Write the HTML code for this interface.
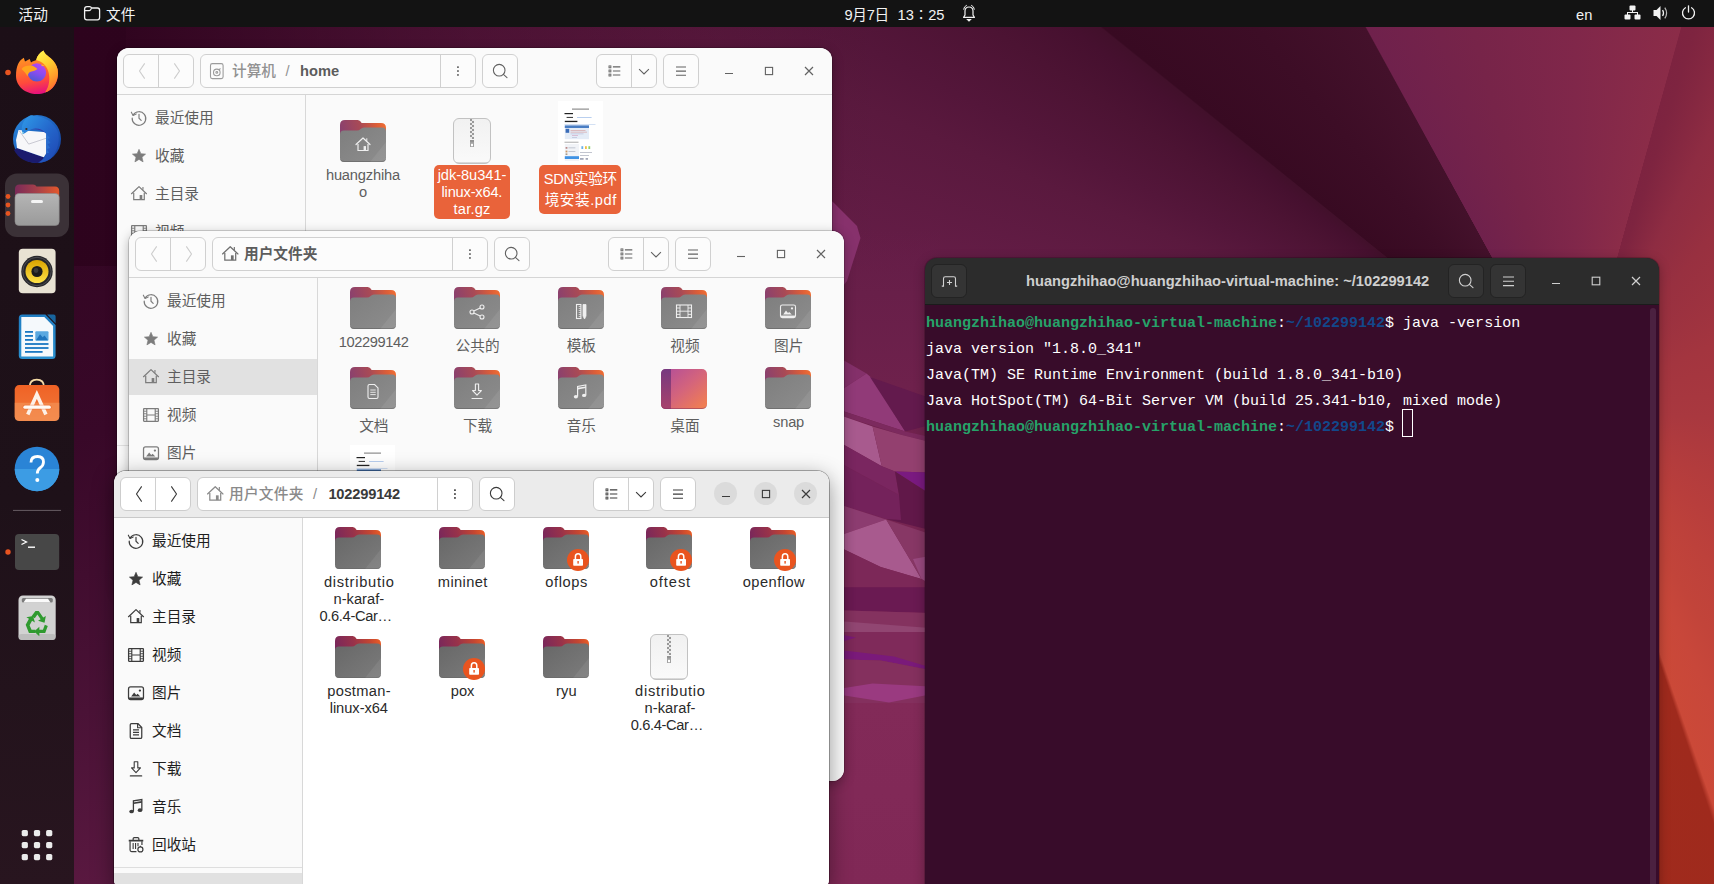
<!DOCTYPE html>
<html lang="zh-CN"><head><meta charset="utf-8"><title>Ubuntu Desktop</title>
<style>
*{box-sizing:border-box;margin:0;padding:0}
html,body{width:1714px;height:884px;overflow:hidden;background:#2c0a20}
body{position:relative;font-family:"Liberation Sans","Noto Sans CJK SC",sans-serif;font-size:14.67px;color:#3d3d3d}
.abs{position:absolute}
#wall{position:absolute;left:0;top:0;width:1714px;height:884px}
#topbar{position:absolute;left:0;top:0;width:1714px;height:27px;background:#131313;color:#f2f2f2;font-size:14.67px}
#topbar span{position:absolute;top:1.5px;line-height:27px;white-space:nowrap}
#dock{position:absolute;left:0;top:27px;width:74px;height:857px;background:linear-gradient(180deg,#1c0f17 0%,#1e1119 55%,#28151f 100%)}
.win{position:absolute;width:715px;border-radius:12px;background:#fafafa;overflow:hidden}
.shadow{position:absolute;border-radius:12px}
.hdr{position:absolute;left:0;top:0;width:715px;height:47px;background:#fafafa;border-bottom:1px solid #d5d5d5}
.win.act .hdr{background:#ebebeb;border-bottom-color:#c9c9c9}
.btn{position:absolute;top:6px;height:34px;border:1px solid #d0d0d0;border-radius:6px;background:#fcfcfc}
.win.act .btn{background:#fff;border-color:#cdcdcd}
.btn i{position:absolute;top:0;width:1px;height:32px;background:#d0d0d0}
.btn svg{position:absolute}
.hdr svg{position:absolute;overflow:visible}
.ptxt{position:absolute;top:0;line-height:32px;white-space:nowrap;color:#929292;font-size:14.67px;font-weight:500}
.ptxt b{color:#5c5c5c;font-weight:bold}
.win.act .ptxt{color:#8a8a8a}
.win.act .ptxt b{color:#3a3a3a}
.side{position:absolute;left:0;top:47px;width:189px;bottom:0;background:#fafafa;border-right:1px solid #d8d8d8}
.srow{position:absolute;left:0;width:188px;height:36px;line-height:36px;color:#5e5e5e;white-space:nowrap}
.srow span{position:absolute;left:38px;top:0}
.srow svg{position:absolute;left:13.5px;top:10px;overflow:visible}
.win.act .srow{color:#1e1e1e}
.srow.sel{background:#e1e1e1}
.cont{position:absolute;left:189px;top:47px;right:0;bottom:0;background:#fafafa}
.win.act .cont{background:#fff}
.lab{position:absolute;width:110px;text-align:center;line-height:17px;color:#5e5e5e;font-size:14.67px;white-space:nowrap}
.win.act .lab{color:#2a2a2a}
.lab.cj{line-height:21px;font-size:14.67px}
.lab.cj2{line-height:21.6px}
.sel2{position:absolute;background:#e9633a;border-radius:5px}
.lab.w{color:#fff}
.ico{position:absolute;overflow:visible}
.wc{position:absolute;width:23px;height:23px;border-radius:12px;background:#dbdbdb}
#term{position:absolute;left:925px;top:258px;width:734px;height:640px;border-radius:12px 12px 0 0;background:#380c2a;overflow:hidden}
#thdr{position:absolute;left:0;top:0;width:734px;height:46.700px;background:#2c2c2c;border-bottom:1px solid #1b1b1b}
.tbtn{position:absolute;top:6px;width:35.500px;height:34px;border:1px solid #232323;border-radius:6px;background:#343434}
#ttitle{position:absolute;left:101px;top:0;line-height:46px;color:#cfcfcf;font-weight:bold;font-size:14.67px;white-space:nowrap}
#tbody{position:absolute;left:1px;top:52.5px;font-family:"Liberation Mono","DejaVu Sans Mono",monospace;font-size:15px;line-height:26px;color:#fff;white-space:pre}
#tbody .g{color:#26a269;font-weight:bold}
#tbody .b{color:#12488b;font-weight:bold}
</style></head><body>
<div id="wallc" style="position:absolute;left:0;top:0;width:1714px;height:884px;background:conic-gradient(from 0deg at 1575px 409px,#80274a 0deg,#8b2c48 15.5deg,#7d2340 15.6deg,#7e2440 17.5deg,#8e2c42 26deg,#983040 38deg,#a3353f 65deg,#a9383f 94deg,#b83e3c 128deg,#c2443a 149deg,#c8473a 155deg,#cb4938 160.8deg,#9f2a1d 161.5deg,#a52c1a 200deg,#7f2855 225deg,#802856 236deg,#812957 250deg,#742351 262deg,#6e214d 270deg,#651d47 282deg,#5a193e 293deg,#54163a 297deg,#4c1333 303deg,#46102f 307deg,#42102b 308.8deg,#380a22 308.95deg,#3d0d26 320deg,#44112b 331.2deg,#6f214c 331.35deg,#772449 345deg,#80274a 360deg)"></div>
<svg id="wall" viewBox="0 0 1714 884">
<defs>
<linearGradient id="wbase" gradientUnits="userSpaceOnUse" x1="74" y1="27" x2="300" y2="884">
<stop offset="0" stop-color="#2f041f"/><stop offset="0.45" stop-color="#380828"/><stop offset="0.75" stop-color="#4a1236"/><stop offset="1" stop-color="#5e1a43"/>
</linearGradient>
<linearGradient id="wA1" gradientUnits="userSpaceOnUse" x1="1101" y1="27" x2="876" y2="308">
<stop offset="0" stop-color="#3f0e29"/><stop offset="0.04" stop-color="#461030"/><stop offset="0.2" stop-color="#4d1234"/><stop offset="0.48" stop-color="#57173b"/><stop offset="0.7" stop-color="#601b42"/><stop offset="1" stop-color="#69204a"/>
</linearGradient>
<linearGradient id="wA2" gradientUnits="userSpaceOnUse" x1="1200" y1="140" x2="1320" y2="60">
<stop offset="0" stop-color="#380a23"/><stop offset="1" stop-color="#44112b"/>
</linearGradient>
<linearGradient id="wA3" gradientUnits="userSpaceOnUse" x1="1400" y1="40" x2="1650" y2="250">
<stop offset="0" stop-color="#71224c"/><stop offset="1" stop-color="#8c2c49"/>
</linearGradient>
<linearGradient id="wA4" gradientUnits="userSpaceOnUse" x1="1640" y1="140" x2="1714" y2="180">
<stop offset="0" stop-color="#7c2340"/><stop offset="1" stop-color="#953040"/>
</linearGradient>
<linearGradient id="wA5" gradientUnits="userSpaceOnUse" x1="0" y1="27" x2="0" y2="884">
<stop offset="0" stop-color="#000" stop-opacity="0.04"/><stop offset="0.25" stop-color="#b83a3c" stop-opacity="0.25"/><stop offset="0.5" stop-color="#b83c3c" stop-opacity="0.85"/><stop offset="0.72" stop-color="#c8483a"/><stop offset="1" stop-color="#cc4b36"/>
</linearGradient>
<linearGradient id="wA1b" gradientUnits="userSpaceOnUse" x1="0" y1="27" x2="0" y2="266"><stop offset="0" stop-color="#6c2049" stop-opacity="0"/><stop offset="0.4" stop-color="#6c2049" stop-opacity="0.06"/><stop offset="1" stop-color="#6c2049" stop-opacity="0.5"/></linearGradient>
<linearGradient id="wleft" gradientUnits="userSpaceOnUse" x1="74" y1="0" x2="880" y2="0"><stop offset="0" stop-color="#2d031d" stop-opacity="0.98"/><stop offset="0.06" stop-color="#2d031d" stop-opacity="0.95"/><stop offset="0.25" stop-color="#2d031d" stop-opacity="0.7"/><stop offset="0.5" stop-color="#2d031d" stop-opacity="0.38"/><stop offset="0.8" stop-color="#2d031d" stop-opacity="0.1"/><stop offset="1" stop-color="#2d031d" stop-opacity="0"/></linearGradient>
<linearGradient id="wstrip" gradientUnits="userSpaceOnUse" x1="0" y1="228" x2="0" y2="884">
<stop offset="0" stop-color="#651d47" stop-opacity="0"/><stop offset="0.1" stop-color="#681f49"/><stop offset="0.24" stop-color="#6e214c"/><stop offset="0.72" stop-color="#822a58"/><stop offset="1" stop-color="#802856"/>
</linearGradient>
</defs>
<!-- far-left dark -->
<rect x="0" y="27" width="126" height="857" fill="url(#wbase)"/>
<rect x="60" y="27" width="820" height="239" fill="url(#wleft)"/>
<!-- left-of-terminal strip -->
<rect x="800" y="228" width="140" height="656" fill="url(#wstrip)"/>
<polygon points="826,196 834,203 857,226 860.500,238 847,281 843,286 826,296" fill="#87316c"/>
<polygon points="838,357 866.500,373.600 838,392" fill="#84306a"/>
<polygon points="838,392 866.500,373.600 872.600,378.700 905.200,431.600 838,409.500" fill="#913a78"/>
<polygon points="870,377 930,398 930,425 905.200,431.600" fill="#631a4d"/>
<polygon points="838,409.500 905.200,431.600 930,437 930,442 901,434.700 838,414.500" fill="#7c2a5e"/>
<polygon points="838,414.500 872.600,426.600 881.800,466.300 838,441.500" fill="#a85a8e"/>
<polygon points="872.600,426.600 901,434.700 930,442 930,472.600 895,471.400 881.800,466.300" fill="#93406f"/>
<polygon points="838,441.500 881.800,466.300 895,471.400 899,495 838,462" fill="#7a2660"/>
<polygon points="895,471.400 930,472.600 930,494 909,480.500" fill="#7a1a80"/>
<polygon points="895,471.400 909,480.500 930,494 930,530 886,519 899,495" fill="#611849"/>
<polygon points="838,462 899,495 901,520 886,519 838,504" fill="#74225b"/>
<polygon points="838,504 886.200,519.400 838,536" fill="#8c3c70"/>
<polygon points="838,536 886.200,519.400 921.500,579.100 880.700,566.900 838,546.500" fill="#a85a8e"/>
<polygon points="886.200,519.400 930,534 930,584 921.500,579.100" fill="#873765"/>
<polygon points="913,559 930,556 930,584 921.500,579.100" fill="#9a4a80"/>
<polygon points="838,546.500 880.700,566.900 921.500,579.100 930,584 930,587.300 838,587.300" fill="#7c2858"/>
<polygon points="838,587.300 930,587.300 930,613 838,610.300" fill="#6a1a52"/>
<polygon points="838,610.300 930,613 930,632 838,632" fill="#84325f"/>
<polygon points="838,621 930,628 930,632 838,632" fill="#914672"/>
<polygon points="838,632 930,632 930,667 884,656 838,651" fill="#7f2a5a"/>
<polygon points="838,634 856,637.500 838,643" fill="#7a1a78"/>
<polygon points="838,649.700 894,656.500 930,667.300 930,670 880.700,660.500 838,659.200" fill="#7a1a7a"/>
<polygon points="838,659.200 880.700,660.500 930,670 930,703 838,703" fill="#84305e"/>
<polygon points="838,689 872.600,683.600 930,686.400 930,694.500 889,702.600 838,694.500" fill="#9a3a80"/>
</svg>
<div id="topbar">
<span style="left:18.5px">活动</span>
<svg class="abs" style="left:83px;top:5px" width="18" height="17" viewBox="0 0 18 17" fill="none" stroke="#f2f2f2" stroke-width="1.3"><path d="M1.6 4 Q1.6 1.6 4 1.6 H6.6 Q8 1.6 8.6 3 H14.5 Q16.6 3 16.6 5.2 V12.6 Q16.6 14.8 14.4 14.8 H3.8 Q1.6 14.8 1.6 12.6 Z"/><path d="M1.8 5.6 H6.4 Q7.6 5.6 8.4 3.4"/></svg>
<span style="left:106px">文件</span>
<span style="left:844.500px;top:2px;letter-spacing:-0.300px">9月7日</span><span style="left:897.600px;top:2.200px;letter-spacing:-0.1px">13∶25</span>
<svg class="abs" style="left:961px;top:4px" width="16" height="18" viewBox="0 0 16 18" fill="none" stroke="#f2f2f2" stroke-width="1.2"><path d="M2.6 13.4 H13.4 L12 11 V7 Q12 3 8 3 Q4 3 4 7 V11 Z" stroke-linejoin="round"/><path d="M6.6 15.6 H9.4 L8 17 Z" fill="#f2f2f2"/><path d="M2.6 5.6 Q3 2.4 5.8 1.2 M13.4 5.6 Q13 2.4 10.2 1.2" stroke-width="1"/></svg>
<span style="left:1576px">en</span>
<svg class="abs" style="left:1624px;top:5px" width="17" height="15" viewBox="0 0 17 15" fill="#f2f2f2"><rect x="5.5" y="0.5" width="6" height="5" rx="1"/><rect x="0.5" y="9.5" width="6" height="5" rx="1"/><rect x="10.5" y="9.5" width="6" height="5" rx="1"/><path d="M8 5 h1 v2 h5 v3 h-1 v-2 h-9 v2 h-1 v-3 h5z"/></svg>
<svg class="abs" style="left:1653px;top:5px" width="16" height="16" viewBox="0 0 16 16" fill="#f2f2f2"><path d="M0.5 5 H3.5 L7.5 1 V15 L3.5 11 H0.5 Z"/><path d="M9.6 5 Q11.4 8 9.6 11" fill="none" stroke="#f2f2f2" stroke-width="1.3"/><path d="M11.8 2.6 Q15.4 8 11.8 13.4" fill="none" stroke="#f2f2f2" stroke-width="1.2" opacity="0.75"/></svg>
<svg class="abs" style="left:1681px;top:5px" width="15" height="15" viewBox="0 0 15 15" fill="none" stroke="#f2f2f2" stroke-width="1.3" stroke-linecap="round"><path d="M4.4 2.8 A6 6 0 1 0 10.6 2.8"/><path d="M7.5 0.8 V7"/></svg>
</div>
<div id="dock"></div>
<svg class="abs" style="left:0;top:27px" width="74" height="857" viewBox="0 27 74 857">
<defs>
<linearGradient id="ffb" x1="0.3" y1="0" x2="0.5" y2="1"><stop offset="0" stop-color="#ffa31f"/><stop offset="0.35" stop-color="#ff7a2a"/><stop offset="0.7" stop-color="#ff4a3c"/><stop offset="1" stop-color="#e6107e"/></linearGradient><linearGradient id="ffy" x1="0.2" y1="0" x2="0.6" y2="1"><stop offset="0" stop-color="#fff24d"/><stop offset="0.4" stop-color="#ffcb30"/><stop offset="0.75" stop-color="#ff9a2a"/><stop offset="1" stop-color="#ff6a30"/></linearGradient><linearGradient id="tbw" x1="0" y1="0" x2="1" y2="1"><stop offset="0" stop-color="#2f9ae8"/><stop offset="0.5" stop-color="#2468cc"/><stop offset="1" stop-color="#1f44b0"/></linearGradient><radialGradient id="ffo" cx="0.55" cy="0.3" r="0.8"><stop offset="0" stop-color="#ffe847"/><stop offset="0.35" stop-color="#ffa429"/><stop offset="0.7" stop-color="#ff4a3a"/><stop offset="1" stop-color="#e31587"/></radialGradient>
<linearGradient id="ffp" x1="0.7" y1="0" x2="0.3" y2="1"><stop offset="0" stop-color="#b846f2"/><stop offset="0.5" stop-color="#8a4cf0"/><stop offset="1" stop-color="#4a5ad2"/></linearGradient>
<linearGradient id="tbg" x1="0" y1="0" x2="1" y2="1"><stop offset="0" stop-color="#2a8be0"/><stop offset="1" stop-color="#123a9c"/></linearGradient>
<linearGradient id="ftab" x1="0" y1="0" x2="1" y2="0"><stop offset="0" stop-color="#7a2a58"/><stop offset="0.5" stop-color="#a6404a"/><stop offset="1" stop-color="#e4582b"/></linearGradient>
<linearGradient id="fgr" x1="0" y1="0" x2="0" y2="1"><stop offset="0" stop-color="#b5b5b5"/><stop offset="1" stop-color="#9a9a9a"/></linearGradient>
<linearGradient id="rby" x1="0" y1="0" x2="0" y2="1"><stop offset="0" stop-color="#d9a300"/><stop offset="1" stop-color="#ffe247"/></linearGradient><linearGradient id="wr" x1="0" y1="0" x2="0" y2="1"><stop offset="0" stop-color="#1f7dc2"/><stop offset="1" stop-color="#2a90cf"/></linearGradient><linearGradient id="sw" x1="0" y1="0" x2="0" y2="1"><stop offset="0" stop-color="#f06225"/><stop offset="1" stop-color="#f07a3c"/></linearGradient>
<linearGradient id="hp" x1="0" y1="0" x2="0" y2="1"><stop offset="0" stop-color="#2a86d8"/><stop offset="1" stop-color="#3aa0e6"/></linearGradient>
</defs>
<!-- firefox -->
<circle cx="8" cy="72.500" r="2.800" fill="#e95420"/>
<path d="M16 76 C16 66 19 60.500 23.800 57.800 L25 61.500 L29.700 59 L31 62.500 C33 61 35 60.500 36.200 60 C37 56 40 52.500 43.400 50.600 C45 55 50 57 53 60.500 C56 64 58 68 58 73 C58 86 49 94 37 94 C25 94 16 86 16 76 Z" fill="url(#ffb)"/>
<path d="M36.200 60 C37 56 40 52.500 43.400 50.600 C45 55 50 57 53 60.500 C56 64 58 68 58 73 C58 82 53 90 45 92.600 C49.500 86 50.500 78 48 70.500 C46 65 42 61.500 36.200 60 Z" fill="url(#ffy)"/>
<circle cx="36.900" cy="72.400" r="9.200" fill="url(#ffp)"/>
<path d="M21.500 69 C24 65.500 30 65 33 66 C35 67 36.500 68 37.500 69 C35 71 32 71.500 30 72 C28.500 73 27.800 74.500 27.500 76.500 C26 73 24 71.500 21.500 69 Z" fill="#ffa51e"/>
<path d="M41 64.500 C43 64.500 44.500 65.500 45.500 66.500 C44 66 43 66 42 66.300 Z" fill="#ffb52a"/>
<!-- thunderbird -->
<circle cx="37" cy="139" r="24" fill="url(#tbg)"/>
<path d="M14 150 C18 158 26 163 37 163 C38 163 39 163 40 162.500 L44 157.500 L17 148 Z" fill="#1b1b6e"/>
<path d="M18.500 130 L46.400 132.300 L46.400 153 L43.800 157.300 L17 148 L16 140 Z" fill="#f7f7f9"/>
<path d="M19.500 131 L28.700 144.100 L46.400 138.200" fill="none" stroke="#b4b4c0" stroke-width="0.700"/>
<path d="M27 130.500 C33 128 41 129 46.400 133.500 L46.400 131 C42 126 33 125.500 27 130.500 Z" fill="#3a2fa0" opacity="0.8"/>
<path d="M22.800 134.200 C20.500 128 22 120 30 115.500 C32 115 33 115.500 33.500 116 C44 116 54 122 58 132 C60 140 58 150 52 157 C50 160 44 162.800 38 162.500 C44 160 47 156 46.400 150 L46.400 134 C42 128 34 127 29 130.500 C26.500 132 24.500 133.500 22.800 134.200 Z" fill="url(#tbw)"/>
<path d="M46.400 134 L50 138 L47.500 139 L50.500 143 L47.500 144 L50 148 L47 149 L49 153 L46.400 153 Z" fill="#2a6fd0"/>
<path d="M22.800 134.200 L21.600 131.600 L24 132.500 Z" fill="#9ad8e8"/>
<circle cx="26.400" cy="129" r="1.100" fill="#3a2418"/>
<!-- files active -->
<rect x="5" y="173.500" width="64" height="63.500" rx="12" fill="#3b3137"/>
<circle cx="8" cy="196.500" r="2.400" fill="#e95420"/><circle cx="8" cy="205" r="2.400" fill="#e95420"/><circle cx="8" cy="213.500" r="2.400" fill="#e95420"/>
<path d="M15 189 Q15 184.500 19.500 184.500 H33 Q35.500 184.500 36.500 186.500 H55 Q59.200 186.500 59.200 191 V200 H15 Z" fill="url(#ftab)"/>
<rect x="15" y="193.500" width="44.200" height="32" rx="4" fill="url(#fgr)"/>
<rect x="15" y="193.500" width="44.200" height="32" rx="4" fill="none" stroke="#8a8a8a" stroke-width="0.6"/>
<rect x="31" y="200" width="12" height="3" rx="1.500" fill="#f5f5f5"/>
<!-- rhythmbox -->
<rect x="18.800" y="248.700" width="36.800" height="44.500" rx="4" fill="#e8e2d3"/>
<circle cx="37" cy="271.500" r="15.700" fill="#26262a"/>
<circle cx="37" cy="271.500" r="14.200" fill="none" stroke="#55555c" stroke-width="0.800"/>
<circle cx="37" cy="271.500" r="11.500" fill="url(#rby)"/>
<circle cx="37" cy="271.500" r="5.600" fill="#1c1c1c"/>
<circle cx="36" cy="270.500" r="2.400" fill="#3a3a3a"/>
<!-- writer -->
<path d="M22.300 314.600 H45.400 L55.600 325 V355.600 Q55.600 359.100 52.100 359.100 H22.300 Q18.800 359.100 18.800 355.600 V318.100 Q18.800 314.600 22.300 314.600 Z" fill="url(#wr)"/>
<path d="M21.300 317.100 H44.300 L53.100 326 V356.600 H21.300 Z" fill="#f5f9fc"/>
<path d="M47 314.600 H53.600 Q55.600 314.600 55.600 316.600 V323.400 Z" fill="#18659e"/>
<rect x="25" y="331" width="8" height="1.800" fill="#1b78c2"/><rect x="25" y="335" width="8" height="1.800" fill="#1b78c2"/><rect x="25" y="339" width="8" height="1.800" fill="#1b78c2"/>
<rect x="35.300" y="331.200" width="13.200" height="9.500" rx="1" fill="#5aa8e0"/><path d="M36 340.200 L40 334.200 L42.600 337.200 L44.600 335.400 L48 340.200 Z" fill="#1f74bc"/>
<rect x="25" y="343.100" width="23.500" height="1.800" fill="#1b78c2"/><rect x="25" y="347.100" width="23.500" height="1.800" fill="#1b78c2"/><rect x="25" y="351" width="17.600" height="1.800" fill="#1b78c2"/>
<!-- software -->
<path d="M29.600 387 Q29.600 379.600 36.800 379.600 Q44 379.600 44 387" fill="none" stroke="#f5dba6" stroke-width="1.800"/>
<rect x="14.700" y="385.100" width="44.600" height="35.800" rx="4.500" fill="url(#sw)"/>
<path d="M14.700 402.800 H59.300 V416.400 Q59.300 420.900 54.800 420.900 H19.200 Q14.700 420.900 14.700 416.400 Z" fill="#f5975c" opacity="0.600"/>
<path d="M27.800 414.600 L36.850 394.500 L45.900 414.600" fill="none" stroke="#fdf1e8" stroke-width="3.600" stroke-linejoin="miter"/>
<path d="M25 407.200 H49.200" stroke="#e8632a" stroke-width="4.800" stroke-linecap="round" opacity="0.5"/>
<path d="M25 407.200 H49.200" stroke="#fffaf5" stroke-width="3.300" stroke-linecap="round"/>
<!-- help -->
<circle cx="37" cy="469" r="22.300" fill="#2a84d6"/><path d="M14.700 469 A22.300 22.300 0 0 0 59.300 469 Z" fill="#3c9ce4"/>
<path d="M31 462.500 Q31 456.500 37.500 456.500 Q43.500 456.500 43.500 462 Q43.500 465.500 40 468 Q37.300 470 37.300 473.500" fill="none" stroke="#fff" stroke-width="2.800"/>
<circle cx="37.300" cy="480" r="2" fill="#fff"/>
<!-- separator -->
<rect x="13" y="509.900" width="48" height="1" fill="#665c63"/>
<!-- terminal -->
<circle cx="8" cy="552" r="2.700" fill="#e95420"/>
<rect x="15" y="534" width="44.200" height="36" rx="4" fill="#474747"/>
<path d="M21.500 539.500 L26.500 542 L21.500 544.500" fill="none" stroke="#fff" stroke-width="1.300"/>
<rect x="28" y="546.500" width="7" height="1.400" fill="#fff"/>
<!-- trash -->
<rect x="18.500" y="595.400" width="37.200" height="44.600" rx="4.500" fill="#d2d2d2"/>
<rect x="18.500" y="634" width="37.200" height="6" rx="3" fill="#bdbdbd"/>
<rect x="21.800" y="598" width="31" height="4.600" rx="1.500" fill="#7a7a7a"/>
<path d="M23.500 602.600 L26 598.800 H48 L50.500 602.600 Z" fill="#fafafa"/>
<g fill="#2f9a2f" transform="translate(37 624) scale(1.3) translate(-37.200 -621.500)"><path d="M33 615.500 L36 611.500 H38.500 L42 616.500 L44 615.300 L43 620.500 L38 619 L40 617.800 L37.500 614.200 L35.500 617 Z"/><path d="M45.500 623 L43.500 628.500 L39 628.500 V631 L35 627.300 L39 623.600 V626 H41.800 L43.200 622 Z"/><path d="M28.500 622 L31 617.500 L29 616.400 L34.200 615.300 L35.600 620.400 L33.400 619 L31.500 622.500 L33 626 H36 V628.500 H31 Z"/></g>
<!-- apps grid -->
<g fill="#ebebeb"><rect x="21.700" y="830" width="6.200" height="6.200" rx="1.600"/><rect x="33.900" y="830" width="6.200" height="6.200" rx="1.600"/><rect x="46.100" y="830" width="6.200" height="6.200" rx="1.600"/><rect x="21.700" y="842" width="6.200" height="6.200" rx="1.600"/><rect x="33.900" y="842" width="6.200" height="6.200" rx="1.600"/><rect x="46.100" y="842" width="6.200" height="6.200" rx="1.600"/><rect x="21.700" y="854" width="6.200" height="6.200" rx="1.600"/><rect x="33.900" y="854" width="6.200" height="6.200" rx="1.600"/><rect x="46.100" y="854" width="6.200" height="6.200" rx="1.600"/></g>
</svg>
<svg width="0" height="0" style="position:absolute"><defs><linearGradient id="ft" gradientUnits="userSpaceOnUse" x1="0" y1="14" x2="46" y2="2"><stop offset="0" stop-color="#884070"/><stop offset="0.45" stop-color="#a84a56"/><stop offset="0.8" stop-color="#dc5e38"/><stop offset="1" stop-color="#f27032"/></linearGradient><linearGradient id="fb" x1="0" y1="0" x2="1" y2="1"><stop offset="0" stop-color="#7e7e7e"/><stop offset="1" stop-color="#8d8d8d"/></linearGradient><linearGradient id="fta" gradientUnits="userSpaceOnUse" x1="0" y1="14" x2="46" y2="2"><stop offset="0" stop-color="#77275c"/><stop offset="0.42" stop-color="#98324a"/><stop offset="0.76" stop-color="#c44631"/><stop offset="1" stop-color="#ec5f24"/></linearGradient><linearGradient id="fba" x1="0" y1="0" x2="1" y2="1"><stop offset="0" stop-color="#676767"/><stop offset="1" stop-color="#7c7c7c"/></linearGradient><linearGradient id="dsk" x1="0" y1="0" x2="1" y2="1"><stop offset="0" stop-color="#b04c9c"/><stop offset="0.5" stop-color="#d4647c"/><stop offset="1" stop-color="#f5824c"/></linearGradient><linearGradient id="dsk2" x1="0" y1="0" x2="0" y2="1"><stop offset="0" stop-color="#76397f"/><stop offset="1" stop-color="#a8426c"/></linearGradient></defs></svg>
<div class="shadow" style="left:117px;top:48px;width:715px;height:548px;box-shadow:0 0 0 1px rgba(0,0,0,0.16),0 3px 12px rgba(0,0,0,0.30)"></div>
<div class="win" id="w1" style="left:117px;top:48px;height:548px"><div class="hdr"><div class="btn" style="left:6px;width:71px"><i style="left:34px"></i><svg style="left:13px;top:8px" width="10" height="16" viewBox="0 0 10 16" fill="none" stroke="#cdcdcd" stroke-width="1.1"><path d="M7.700 0.400 L2.500 8 L7.700 15.600"/></svg><svg style="left:47.500px;top:8px" width="10" height="16" viewBox="0 0 10 16" fill="none" stroke="#cdcdcd" stroke-width="1.1"><path d="M2.300 0.400 L7.500 8 L2.300 15.600"/></svg></div><div class="btn" style="left:83px;width:276px"><i style="left:239px"></i><svg style="left:8.300px;top:8px" width="16" height="16" viewBox="0 0 16 16" fill="none" stroke="#9c9c9c" stroke-width="1.1"><rect x="1.500" y="0.600" width="12.600" height="15" rx="1.800"/><circle cx="7.800" cy="9.400" r="3.300"/><circle cx="7.800" cy="9.400" r="0.900"/><path d="M10.200 6.800 L11.400 5.400"/></svg><span class="ptxt" style="left:31px">计算机<span style="margin:0 10.500px 0 9.500px">/</span><b>home</b></span><svg style="left:255px;top:9px" width="4" height="14" viewBox="0 0 4 14" fill="#626262"><rect x="1.1" y="2.300" width="1.700" height="1.700"/><rect x="1.100" y="6.200" width="1.700" height="1.700"/><rect x="1.100" y="10.100" width="1.700" height="1.700"/></svg></div><div class="btn" style="left:365px;width:36px"><svg style="left:9px;top:8px" width="16" height="16" viewBox="0 0 16 16" fill="none" stroke="#626262" stroke-width="1.1"><circle cx="7.200" cy="7.200" r="5.800"/><path d="M11.400 11.400 L15 14.600" stroke-linecap="round"/></svg></div><div class="btn" style="left:479px;width:61px"><i style="left:34px"></i><svg style="left:10px;top:9px" width="14" height="14" viewBox="0 0 14 14" fill="none" stroke="#626262" stroke-width="1"><g stroke-width="0.900"><rect x="2" y="1.900" width="1.900" height="1.900"/><rect x="2" y="6" width="1.900" height="1.900"/><rect x="2" y="10.100" width="1.900" height="1.900"/></g><path d="M5.900 2.850 H13.300 M5.900 6.950 H13.300 M5.900 11.050 H13.300" stroke-width="1.100"/></svg><svg style="left:41.300px;top:12.500px" width="12" height="8" viewBox="0 0 12 8" fill="none" stroke="#626262" stroke-width="1.100"><path d="M1.100 1.200 L6 6 L10.900 1.200"/></svg></div><div class="btn" style="left:546px;width:36px"><svg style="left:11.600px;top:10.600px" width="11" height="11" viewBox="0 0 11 11" stroke="#626262" stroke-width="1.100"><path d="M0 1 H10 M0 5.100 H10 M0 9.200 H10"/></svg></div><svg style="left:606.700px;top:18px" width="10" height="10" viewBox="0 0 10 10" stroke="#626262" stroke-width="1.100" fill="none"><path d="M1 7.500 H9"/></svg><svg style="left:646.700px;top:18px" width="10" height="10" viewBox="0 0 10 10" stroke="#626262" stroke-width="1.100" fill="none"><rect x="1.400" y="1.400" width="7.200" height="7.200"/></svg><svg style="left:686.600px;top:18px" width="10" height="10" viewBox="0 0 10 10" stroke="#626262" stroke-width="1.200" fill="none"><path d="M1 1 L9 9 M9 1 L1 9"/></svg></div><div class="side"><div class="srow" style="top:5px"><svg width="16" height="16" viewBox="0 0 16 16" fill="none" stroke="#7c7c7c" stroke-width="1.1"><g transform="translate(8 8) scale(1.08) translate(-8 -8)"><path d="M2.6 5.2 A6.3 6.3 0 1 1 1.7 8" stroke-linecap="round"/><path d="M0.9 2.6 L2.5 5.6 L5.4 4.2" stroke-linecap="round" stroke-linejoin="round" stroke-width="1"/><path d="M8 4.6 V8.2 L10 10.2" stroke-linecap="round"/></g></svg><span>最近使用</span></div><div class="srow" style="top:43px"><svg width="16" height="16" viewBox="0 0 16 16" fill="none" stroke="#7c7c7c" stroke-width="1.1"><g transform="translate(8 7.7) scale(1.0) translate(-8 -8)"><path d="M8 1.6 L9.9 6 L14.6 6.4 L11 9.5 L12.1 14.2 L8 11.7 L3.9 14.2 L5 9.5 L1.4 6.4 L6.1 6 Z" fill="#7c7c7c" stroke-width="0.6" stroke-linejoin="round"/></g></svg><span>收藏</span></div><div class="srow" style="top:81px"><svg width="16" height="16" viewBox="0 0 16 16" fill="none" stroke="#7c7c7c" stroke-width="1.1"><g transform="translate(8 7.5) scale(1.1) translate(-8 -8)"><path d="M1.2 8.2 L8 1.8 L14.8 8.2" stroke-linecap="round" stroke-linejoin="round"/><path d="M3.2 7.4 V13.6 H12.8 V7.4"/><path d="M11.6 2 V4.6" stroke-width="1"/><rect x="8.6" y="9.4" width="2.4" height="4.2" fill="#7c7c7c" stroke="none"/></g></svg><span>主目录</span></div><div class="srow" style="top:119px"><svg width="16" height="16" viewBox="0 0 16 16" fill="none" stroke="#7c7c7c" stroke-width="1.1"><g transform="translate(8 8) scale(1.14) translate(-8 -8)"><rect x="1.500" y="2.500" width="13" height="11" rx="0.400"/><path d="M4.300 2.500 V13.500 M11.700 2.500 V13.500 M4.300 8 H11.700" stroke-width="1"/><path d="M1.500 4.700 H4.300 M1.500 6.900 H4.300 M1.500 9.100 H4.300 M1.500 11.300 H4.300 M11.700 4.700 H14.500 M11.700 6.900 H14.500 M11.700 9.100 H14.500 M11.700 11.300 H14.500" stroke-width="0.800"/></g></svg><span>视频</span></div><div class="abs" style="left:0;top:349.500px;width:188px;height:1px;background:#e2e2e2"></div></div><div class="cont"><div class="abs" style="left:34.0px;top:25px"><svg class="ico" width="46" height="42" viewBox="0 0 46 42"><path d="M0 5 Q0 0 5 0 H17.5 Q19.5 0 20.8 1.8 L21.6 3 H41 Q46 3 46 8 V20 H0 Z" fill="url(#ft)"/><path d="M0 14.500 Q0 10.500 4 10.500 H17 Q19.200 10.500 20.600 9 Q22 7.500 24 7.500 H42 Q46 7.500 46 11.500 V37.500 Q46 42 41.500 42 H4.500 Q0 42 0 37.500 Z" fill="url(#fb)"/><path d="M4.500 42 H41.500 Q46 42 46 37.500 V36.500 Q46 41 41.500 41 H4.500 Q0 41 0 36.500 V37.500 Q0 42 4.500 42Z" fill="#6a6a6a" opacity="0.8"/><path d="M46 22 V37.500 Q46 42 41.500 42 H30 Z" fill="#fff" opacity="0.07"/><g transform="translate(15,16.500)" fill="none" stroke="#efefef" stroke-width="1.200"><path d="M1 8 L8 1.500 L15 8" stroke-linejoin="round" stroke-linecap="round"/><path d="M3 7.400 V14 H13 V7.400"/><path d="M11.800 1.800 V4.400" stroke-width="1"/><rect x="8.600" y="9.600" width="2.400" height="4.400" fill="#efefef" stroke="none"/></g></svg></div><div class="lab" style="left:2.00px;top:72px"><span style="display:block;letter-spacing:-0.18px;margin-right:0.18px">huangzhiha</span><span style="display:block">o</span></div><div class="sel2" style="left:128.3px;top:70.30000000000001px;width:75.600px;height:53.600px"></div><div class="abs" style="left:147.0px;top:23px"><svg class="ico" width="38" height="46" viewBox="0 0 38 46"><defs><linearGradient id="zg" x1="0" y1="0" x2="0" y2="1"><stop offset="0" stop-color="#f1f1f1"/><stop offset="1" stop-color="#fafafa"/></linearGradient></defs><rect x="0.500" y="0.500" width="37" height="45" rx="5.500" fill="url(#zg)" stroke="#c2c2c2"/><path d="M3 44.600 H35" stroke="#b0b0b0" stroke-width="0.800" opacity="0.6"/><rect x="17" y="1.0" width="2" height="2" fill="#999"/><rect x="19" y="1.0" width="2" height="2" fill="#ececec"/><rect x="19" y="3.0" width="2" height="2" fill="#999"/><rect x="17" y="3.0" width="2" height="2" fill="#ececec"/><rect x="17" y="5.0" width="2" height="2" fill="#999"/><rect x="19" y="5.0" width="2" height="2" fill="#ececec"/><rect x="19" y="7.0" width="2" height="2" fill="#999"/><rect x="17" y="7.0" width="2" height="2" fill="#ececec"/><rect x="17" y="9.0" width="2" height="2" fill="#999"/><rect x="19" y="9.0" width="2" height="2" fill="#ececec"/><rect x="19" y="11.0" width="2" height="2" fill="#999"/><rect x="17" y="11.0" width="2" height="2" fill="#ececec"/><rect x="17" y="13.0" width="2" height="2" fill="#999"/><rect x="19" y="13.0" width="2" height="2" fill="#ececec"/><rect x="19" y="15.0" width="2" height="2" fill="#999"/><rect x="17" y="15.0" width="2" height="2" fill="#ececec"/><rect x="17" y="17.0" width="2" height="2" fill="#999"/><rect x="19" y="17.0" width="2" height="2" fill="#ececec"/><rect x="19" y="19.0" width="2" height="2" fill="#999"/><rect x="17" y="19.0" width="2" height="2" fill="#ececec"/><rect x="17" y="22.200" width="4" height="6.800" fill="#a2a2a2"/><rect x="17" y="22.200" width="4" height="1.400" fill="#8c8c8c"/><rect x="18" y="25.800" width="2" height="2.400" fill="#fff"/></svg></div><div class="lab w" style="left:111.00px;top:72px"><span style="display:block;letter-spacing:-0.06px;margin-right:0.06px">jdk-8u341-</span><span style="display:block;letter-spacing:-0.21px;margin-right:0.21px">linux-x64.</span><span style="display:block;letter-spacing:0.19px;margin-right:-0.19px">tar.gz</span></div><div class="sel2" style="left:233px;top:70.30000000000001px;width:82px;height:48.700px"></div><div class="abs" style="left:252.0px;top:5.5px"><svg class="ico" width="45" height="63" viewBox="0 0 45 63"><rect width="45" height="63" fill="#fff"/><rect x="14" y="7.600" width="17" height="1" fill="#777"/><rect x="6.500" y="12" width="8.500" height="1.200" fill="#222"/><rect x="8.600" y="15.900" width="6.400" height="1.100" fill="#444"/><rect x="19" y="16" width="14.600" height="0.800" fill="#a8c4ec"/><rect x="6.800" y="19.800" width="12.600" height="1.300" fill="#222"/><rect x="6.500" y="23.300" width="31" height="0.500" fill="#a9c3e8"/><rect x="6.800" y="24.400" width="24.200" height="13.800" fill="#e4ecf7"/><rect x="6.800" y="24.400" width="24.200" height="2.600" fill="#4a7ec4"/><rect x="7.600" y="27.800" width="3.600" height="4" fill="#3a6cb8"/><rect x="12.500" y="29" width="15" height="0.600" fill="#d39a9a"/><rect x="12.500" y="30.800" width="16.500" height="0.600" fill="#d39a9a"/><rect x="12.500" y="32.600" width="13" height="0.600" fill="#b4b8d4"/><rect x="14" y="34.400" width="6" height="0.600" fill="#d0a0c0"/><rect x="14" y="36" width="5" height="0.600" fill="#b4b8d4"/><rect x="6.500" y="40.800" width="14" height="0.700" fill="#888"/><rect x="6.800" y="43" width="14.200" height="17" fill="#f1f3f7"/><rect x="6.800" y="55.200" width="14.200" height="2.800" fill="#3f92e4"/><rect x="7.600" y="46" width="1.800" height="1.800" fill="#b88"/><rect x="7.600" y="49.600" width="1.800" height="1.800" fill="#c96"/><rect x="7.600" y="52.400" width="1.800" height="1.600" fill="#a98"/><rect x="10.400" y="46.600" width="7" height="0.600" fill="#a4a8b8"/><rect x="10.400" y="50.200" width="7" height="0.600" fill="#a4a8b8"/><rect x="23.400" y="45.200" width="1.800" height="2.800" fill="#6ab0e8"/><rect x="27" y="45.200" width="1.800" height="2.800" fill="#f0c040"/><rect x="30.400" y="45.200" width="1.800" height="2.800" fill="#8ed070"/><rect x="22" y="51" width="12" height="0.600" fill="#9a9eb0"/><rect x="22" y="54.200" width="9" height="0.600" fill="#9a9eb0"/><rect x="22" y="57" width="3.600" height="1.800" fill="#a4a8b8"/><rect x="27.600" y="57" width="2.400" height="1.800" fill="#a4a8b8"/></svg></div><div class="lab cj w cj2" style="left:219.50px;top:73.80000000000001px"><span style="display:block;letter-spacing:-0.29px;margin-right:0.29px">SDN实验环</span><span style="display:block;letter-spacing:0.54px;margin-right:-0.54px">境安装.pdf</span></div></div></div>
<div class="shadow" style="left:129px;top:231px;width:715px;height:550px;box-shadow:0 0 0 1px rgba(0,0,0,0.16),0 3px 12px rgba(0,0,0,0.30)"></div>
<div class="win" id="w2" style="left:129px;top:231px;height:550px"><div class="hdr"><div class="btn" style="left:6px;width:71px"><i style="left:34px"></i><svg style="left:13px;top:8px" width="10" height="16" viewBox="0 0 10 16" fill="none" stroke="#cdcdcd" stroke-width="1.1"><path d="M7.700 0.400 L2.500 8 L7.700 15.600"/></svg><svg style="left:47.500px;top:8px" width="10" height="16" viewBox="0 0 10 16" fill="none" stroke="#cdcdcd" stroke-width="1.1"><path d="M2.300 0.400 L7.500 8 L2.300 15.600"/></svg></div><div class="btn" style="left:83px;width:276px"><i style="left:239px"></i><svg style="left:8.500px;top:8px" width="16.500" height="16.500" viewBox="0 0 16 16" fill="none" stroke="#707070" stroke-width="1.1"><g transform="translate(8 7.5) scale(1.1) translate(-8 -8)"><path d="M1.2 8.2 L8 1.8 L14.8 8.2" stroke-linecap="round" stroke-linejoin="round"/><path d="M3.2 7.4 V13.6 H12.8 V7.4"/><path d="M11.6 2 V4.6" stroke-width="1"/><rect x="8.6" y="9.4" width="2.4" height="4.2" fill="#707070" stroke="none"/></g></svg><span class="ptxt" style="left:31px"><b>用户文件夹</b></span><svg style="left:255px;top:9px" width="4" height="14" viewBox="0 0 4 14" fill="#626262"><rect x="1.1" y="2.300" width="1.700" height="1.700"/><rect x="1.100" y="6.200" width="1.700" height="1.700"/><rect x="1.100" y="10.100" width="1.700" height="1.700"/></svg></div><div class="btn" style="left:365px;width:36px"><svg style="left:9px;top:8px" width="16" height="16" viewBox="0 0 16 16" fill="none" stroke="#626262" stroke-width="1.1"><circle cx="7.200" cy="7.200" r="5.800"/><path d="M11.400 11.400 L15 14.600" stroke-linecap="round"/></svg></div><div class="btn" style="left:479px;width:61px"><i style="left:34px"></i><svg style="left:10px;top:9px" width="14" height="14" viewBox="0 0 14 14" fill="none" stroke="#626262" stroke-width="1"><g stroke-width="0.900"><rect x="2" y="1.900" width="1.900" height="1.900"/><rect x="2" y="6" width="1.900" height="1.900"/><rect x="2" y="10.100" width="1.900" height="1.900"/></g><path d="M5.900 2.850 H13.300 M5.900 6.950 H13.300 M5.900 11.050 H13.300" stroke-width="1.100"/></svg><svg style="left:41.300px;top:12.500px" width="12" height="8" viewBox="0 0 12 8" fill="none" stroke="#626262" stroke-width="1.100"><path d="M1.100 1.200 L6 6 L10.900 1.200"/></svg></div><div class="btn" style="left:546px;width:36px"><svg style="left:11.600px;top:10.600px" width="11" height="11" viewBox="0 0 11 11" stroke="#626262" stroke-width="1.100"><path d="M0 1 H10 M0 5.100 H10 M0 9.200 H10"/></svg></div><svg style="left:606.700px;top:18px" width="10" height="10" viewBox="0 0 10 10" stroke="#626262" stroke-width="1.100" fill="none"><path d="M1 7.500 H9"/></svg><svg style="left:646.700px;top:18px" width="10" height="10" viewBox="0 0 10 10" stroke="#626262" stroke-width="1.100" fill="none"><rect x="1.400" y="1.400" width="7.200" height="7.200"/></svg><svg style="left:686.600px;top:18px" width="10" height="10" viewBox="0 0 10 10" stroke="#626262" stroke-width="1.200" fill="none"><path d="M1 1 L9 9 M9 1 L1 9"/></svg></div><div class="side"><div class="srow" style="top:5px"><svg width="16" height="16" viewBox="0 0 16 16" fill="none" stroke="#7c7c7c" stroke-width="1.1"><g transform="translate(8 8) scale(1.08) translate(-8 -8)"><path d="M2.6 5.2 A6.3 6.3 0 1 1 1.7 8" stroke-linecap="round"/><path d="M0.9 2.6 L2.5 5.6 L5.4 4.2" stroke-linecap="round" stroke-linejoin="round" stroke-width="1"/><path d="M8 4.6 V8.2 L10 10.2" stroke-linecap="round"/></g></svg><span>最近使用</span></div><div class="srow" style="top:43px"><svg width="16" height="16" viewBox="0 0 16 16" fill="none" stroke="#7c7c7c" stroke-width="1.1"><g transform="translate(8 7.7) scale(1.0) translate(-8 -8)"><path d="M8 1.6 L9.9 6 L14.6 6.4 L11 9.5 L12.1 14.2 L8 11.7 L3.9 14.2 L5 9.5 L1.4 6.4 L6.1 6 Z" fill="#7c7c7c" stroke-width="0.6" stroke-linejoin="round"/></g></svg><span>收藏</span></div><div class="srow sel" style="top:81px"><svg width="16" height="16" viewBox="0 0 16 16" fill="none" stroke="#7c7c7c" stroke-width="1.1"><g transform="translate(8 7.5) scale(1.1) translate(-8 -8)"><path d="M1.2 8.2 L8 1.8 L14.8 8.2" stroke-linecap="round" stroke-linejoin="round"/><path d="M3.2 7.4 V13.6 H12.8 V7.4"/><path d="M11.6 2 V4.6" stroke-width="1"/><rect x="8.6" y="9.4" width="2.4" height="4.2" fill="#7c7c7c" stroke="none"/></g></svg><span>主目录</span></div><div class="srow" style="top:119px"><svg width="16" height="16" viewBox="0 0 16 16" fill="none" stroke="#7c7c7c" stroke-width="1.1"><g transform="translate(8 8) scale(1.14) translate(-8 -8)"><rect x="1.500" y="2.500" width="13" height="11" rx="0.400"/><path d="M4.300 2.500 V13.500 M11.700 2.500 V13.500 M4.300 8 H11.700" stroke-width="1"/><path d="M1.500 4.700 H4.300 M1.500 6.900 H4.300 M1.500 9.100 H4.300 M1.500 11.300 H4.300 M11.700 4.700 H14.500 M11.700 6.900 H14.500 M11.700 9.100 H14.500 M11.700 11.300 H14.500" stroke-width="0.800"/></g></svg><span>视频</span></div><div class="srow" style="top:157px"><svg width="16" height="16" viewBox="0 0 16 16" fill="none" stroke="#7c7c7c" stroke-width="1.1"><g transform="translate(8 8.3) scale(1.15) translate(-8 -8)"><rect x="1.500" y="2.500" width="13" height="11" rx="1.800"/><path d="M2 12.400 H14" stroke-width="1.600"/><path d="M3.800 10.800 L6.400 7.200 L8.200 9.400 L9.400 8.400 L11.800 10.800 Z" fill="#7c7c7c" stroke="none"/><circle cx="11.400" cy="5.600" r="1" fill="#7c7c7c" stroke="none"/></g></svg><span>图片</span></div><div class="srow" style="top:195px"><svg width="16" height="16" viewBox="0 0 16 16" fill="none" stroke="#7c7c7c" stroke-width="1.1"><g transform="translate(8 8) scale(1.15) translate(-8 -8)"><path d="M3 2.6 Q3 1.5 4.1 1.5 H9.6 L13 4.9 V13.4 Q13 14.5 11.9 14.5 H4.1 Q3 14.5 3 13.4 Z" stroke-linejoin="round"/><path d="M5.4 7 H10.6 M5.4 9.2 H10.6 M5.4 11.4 H10.6" stroke-width="1"/><path d="M9.4 1.8 V5.2 H12.8" stroke-width="1"/></g></svg><span>文档</span></div><div class="srow" style="top:233px"><svg width="16" height="16" viewBox="0 0 16 16" fill="none" stroke="#7c7c7c" stroke-width="1.1"><g transform="translate(8 8) scale(1.12) translate(-8 -8)"><path d="M6.4 1.5 H9.6 V7 H12 L8 11.2 L4 7 H6.4 Z" stroke-linejoin="round" stroke-width="1"/><path d="M3 14.2 H13" stroke-linecap="round" stroke-width="1.2"/></g></svg><span>下载</span></div><div class="srow" style="top:271px"><svg width="16" height="16" viewBox="0 0 16 16" fill="none" stroke="#7c7c7c" stroke-width="1.1"><g transform="translate(8 7.5) scale(1.08) translate(-8 -8)"><path d="M5.6 12.4 V2.8 L13.4 1.6 V11.2" stroke-width="1.2"/><path d="M5.6 5 L13.4 3.8" stroke-width="1.6"/><ellipse cx="3.9" cy="12.6" rx="2.1" ry="1.7" fill="#7c7c7c" stroke="none"/><ellipse cx="11.7" cy="11.4" rx="2.1" ry="1.7" fill="#7c7c7c" stroke="none"/></g></svg><span>音乐</span></div><div class="srow" style="top:309px"><svg width="16" height="16" viewBox="0 0 16 16" fill="none" stroke="#7c7c7c" stroke-width="1.1"><g transform="translate(8 7.6) scale(1.1) translate(-8 -8)"><path d="M2.6 5 V13 Q2.6 14.4 4 14.4 H8.4" /><path d="M13.4 5 V8.4"/><path d="M1.4 4.4 H14.6" stroke-width="1.4"/><path d="M5.4 3.8 V2.6 Q5.4 1.6 6.4 1.6 H9.6 Q10.6 1.6 10.6 2.6 V3.8" /><path d="M5.4 6.6 V12 M7.6 6.6 V12 M9.8 6.6 V9.4" stroke-width="1"/><circle cx="12" cy="12.4" r="2.3"/><path d="M12 10.2 V9" stroke-width="1"/></g></svg><span>回收站</span></div></div><div class="cont"><div class="abs" style="left:32.06999999999999px;top:9px"><svg class="ico" width="46" height="42" viewBox="0 0 46 42"><path d="M0 5 Q0 0 5 0 H17.5 Q19.5 0 20.8 1.8 L21.6 3 H41 Q46 3 46 8 V20 H0 Z" fill="url(#ft)"/><path d="M0 14.500 Q0 10.500 4 10.500 H17 Q19.200 10.500 20.600 9 Q22 7.500 24 7.500 H42 Q46 7.500 46 11.500 V37.500 Q46 42 41.500 42 H4.500 Q0 42 0 37.500 Z" fill="url(#fb)"/><path d="M4.500 42 H41.500 Q46 42 46 37.500 V36.500 Q46 41 41.500 41 H4.500 Q0 41 0 36.500 V37.500 Q0 42 4.500 42Z" fill="#6a6a6a" opacity="0.8"/><path d="M46 22 V37.500 Q46 42 41.500 42 H30 Z" fill="#fff" opacity="0.07"/></svg></div><div class="lab" style="left:0.87px;top:55.5px"><span style="display:block;letter-spacing:-0.38px;margin-right:0.38px">102299142</span></div><div class="abs" style="left:135.8px;top:9px"><svg class="ico" width="46" height="42" viewBox="0 0 46 42"><path d="M0 5 Q0 0 5 0 H17.5 Q19.5 0 20.8 1.8 L21.6 3 H41 Q46 3 46 8 V20 H0 Z" fill="url(#ft)"/><path d="M0 14.500 Q0 10.500 4 10.500 H17 Q19.200 10.500 20.600 9 Q22 7.500 24 7.500 H42 Q46 7.500 46 11.500 V37.500 Q46 42 41.500 42 H4.500 Q0 42 0 37.500 Z" fill="url(#fb)"/><path d="M4.500 42 H41.500 Q46 42 46 37.500 V36.500 Q46 41 41.500 41 H4.500 Q0 41 0 36.500 V37.500 Q0 42 4.500 42Z" fill="#6a6a6a" opacity="0.8"/><path d="M46 22 V37.500 Q46 42 41.500 42 H30 Z" fill="#fff" opacity="0.07"/><g fill="none" stroke="#efefef" stroke-width="1.100"><circle cx="18" cy="25" r="2"/><circle cx="28" cy="20" r="2"/><circle cx="28" cy="30" r="2"/><path d="M19.800 24.100 L26.200 20.900 M19.800 25.900 L26.200 29.100"/></g></svg></div><div class="lab cj" style="left:104.60px;top:58.30000000000001px"><span style="display:block">公共的</span></div><div class="abs" style="left:239.5px;top:9px"><svg class="ico" width="46" height="42" viewBox="0 0 46 42"><path d="M0 5 Q0 0 5 0 H17.5 Q19.5 0 20.8 1.8 L21.6 3 H41 Q46 3 46 8 V20 H0 Z" fill="url(#ft)"/><path d="M0 14.500 Q0 10.500 4 10.500 H17 Q19.200 10.500 20.600 9 Q22 7.500 24 7.500 H42 Q46 7.500 46 11.500 V37.500 Q46 42 41.500 42 H4.500 Q0 42 0 37.500 Z" fill="url(#fb)"/><path d="M4.500 42 H41.500 Q46 42 46 37.500 V36.500 Q46 41 41.500 41 H4.500 Q0 41 0 36.500 V37.500 Q0 42 4.500 42Z" fill="#6a6a6a" opacity="0.8"/><path d="M46 22 V37.500 Q46 42 41.500 42 H30 Z" fill="#fff" opacity="0.07"/><g fill="none" stroke="#efefef" stroke-width="1.100"><rect x="18.500" y="17.500" width="4.400" height="14"/><path d="M20.700 19.500 H22.900 M20.700 21.500 H22.900 M20.700 23.500 H22.900 M20.700 25.500 H22.900 M20.700 27.500 H22.900 M20.700 29.500 H22.900" stroke-width="0.700"/><path d="M25 17.500 H28 V29 L26.500 32 L25 29 Z" fill="#efefef" stroke-width="0.800"/></g></svg></div><div class="lab cj" style="left:208.30px;top:58.30000000000001px"><span style="display:block">模板</span></div><div class="abs" style="left:343.20000000000005px;top:9px"><svg class="ico" width="46" height="42" viewBox="0 0 46 42"><path d="M0 5 Q0 0 5 0 H17.5 Q19.5 0 20.8 1.8 L21.6 3 H41 Q46 3 46 8 V20 H0 Z" fill="url(#ft)"/><path d="M0 14.500 Q0 10.500 4 10.500 H17 Q19.200 10.500 20.600 9 Q22 7.500 24 7.500 H42 Q46 7.500 46 11.500 V37.500 Q46 42 41.500 42 H4.500 Q0 42 0 37.500 Z" fill="url(#fb)"/><path d="M4.500 42 H41.500 Q46 42 46 37.500 V36.500 Q46 41 41.500 41 H4.500 Q0 41 0 36.500 V37.500 Q0 42 4.500 42Z" fill="#6a6a6a" opacity="0.8"/><path d="M46 22 V37.500 Q46 42 41.500 42 H30 Z" fill="#fff" opacity="0.07"/><g fill="none" stroke="#efefef" stroke-width="1.100"><rect x="15.500" y="18" width="15" height="12.500"/><path d="M19 18 V30.500 M27 18 V30.500 M19 24.200 H27 M15.500 21 H19 M15.500 24.200 H19 M15.500 27.400 H19 M27 21 H30.500 M27 24.200 H30.500 M27 27.400 H30.500" stroke-width="0.900"/></g></svg></div><div class="lab cj" style="left:312.00px;top:58.30000000000001px"><span style="display:block">视频</span></div><div class="abs" style="left:446.9px;top:9px"><svg class="ico" width="46" height="42" viewBox="0 0 46 42"><path d="M0 5 Q0 0 5 0 H17.5 Q19.5 0 20.8 1.8 L21.6 3 H41 Q46 3 46 8 V20 H0 Z" fill="url(#ft)"/><path d="M0 14.500 Q0 10.500 4 10.500 H17 Q19.200 10.500 20.600 9 Q22 7.500 24 7.500 H42 Q46 7.500 46 11.500 V37.500 Q46 42 41.500 42 H4.500 Q0 42 0 37.500 Z" fill="url(#fb)"/><path d="M4.500 42 H41.500 Q46 42 46 37.500 V36.500 Q46 41 41.500 41 H4.500 Q0 41 0 36.500 V37.500 Q0 42 4.500 42Z" fill="#6a6a6a" opacity="0.8"/><path d="M46 22 V37.500 Q46 42 41.500 42 H30 Z" fill="#fff" opacity="0.07"/><g fill="none" stroke="#efefef" stroke-width="1.100"><rect x="15.500" y="18" width="15" height="12.600" rx="1.800"/><path d="M16 29.400 H30" stroke-width="1.700"/><path d="M18.200 27.600 L21 23.600 L23 26 L24.200 25 L26.800 27.600 Z" fill="#efefef" stroke="none"/><circle cx="27" cy="21.400" r="1.100" fill="#efefef" stroke="none"/></g></svg></div><div class="lab cj" style="left:415.70px;top:58.30000000000001px"><span style="display:block">图片</span></div><div class="abs" style="left:32.06999999999999px;top:89px"><svg class="ico" width="46" height="42" viewBox="0 0 46 42"><path d="M0 5 Q0 0 5 0 H17.5 Q19.5 0 20.8 1.8 L21.6 3 H41 Q46 3 46 8 V20 H0 Z" fill="url(#ft)"/><path d="M0 14.500 Q0 10.500 4 10.500 H17 Q19.200 10.500 20.600 9 Q22 7.500 24 7.500 H42 Q46 7.500 46 11.500 V37.500 Q46 42 41.500 42 H4.500 Q0 42 0 37.500 Z" fill="url(#fb)"/><path d="M4.500 42 H41.500 Q46 42 46 37.500 V36.500 Q46 41 41.500 41 H4.500 Q0 41 0 36.500 V37.500 Q0 42 4.500 42Z" fill="#6a6a6a" opacity="0.8"/><path d="M46 22 V37.500 Q46 42 41.500 42 H30 Z" fill="#fff" opacity="0.07"/><g fill="none" stroke="#efefef" stroke-width="1.100"><path d="M18 19 Q18 17.500 19.500 17.500 H24.600 L28 20.900 V30 Q28 31.500 26.500 31.500 H19.500 Q18 31.500 18 30 Z"/><path d="M20.300 23 H25.700 M20.300 25.300 H25.700 M20.300 27.600 H25.700" stroke-width="0.900"/></g></svg></div><div class="lab cj" style="left:0.87px;top:138.3px"><span style="display:block">文档</span></div><div class="abs" style="left:135.8px;top:89px"><svg class="ico" width="46" height="42" viewBox="0 0 46 42"><path d="M0 5 Q0 0 5 0 H17.5 Q19.5 0 20.8 1.8 L21.6 3 H41 Q46 3 46 8 V20 H0 Z" fill="url(#ft)"/><path d="M0 14.500 Q0 10.500 4 10.500 H17 Q19.200 10.500 20.600 9 Q22 7.500 24 7.500 H42 Q46 7.500 46 11.500 V37.500 Q46 42 41.500 42 H4.500 Q0 42 0 37.500 Z" fill="url(#fb)"/><path d="M4.500 42 H41.500 Q46 42 46 37.500 V36.500 Q46 41 41.500 41 H4.500 Q0 41 0 36.500 V37.500 Q0 42 4.500 42Z" fill="#6a6a6a" opacity="0.8"/><path d="M46 22 V37.500 Q46 42 41.500 42 H30 Z" fill="#fff" opacity="0.07"/><g fill="none" stroke="#efefef" stroke-width="1.100"><path d="M21.400 17 H24.600 V23.500 H27.400 L23 28.200 L18.600 23.500 H21.400 Z" stroke-linejoin="round"/><path d="M18 31.500 H28" stroke-linecap="round"/></g></svg></div><div class="lab cj" style="left:104.60px;top:138.3px"><span style="display:block">下载</span></div><div class="abs" style="left:239.5px;top:89px"><svg class="ico" width="46" height="42" viewBox="0 0 46 42"><path d="M0 5 Q0 0 5 0 H17.5 Q19.5 0 20.8 1.8 L21.6 3 H41 Q46 3 46 8 V20 H0 Z" fill="url(#ft)"/><path d="M0 14.500 Q0 10.500 4 10.500 H17 Q19.200 10.500 20.600 9 Q22 7.500 24 7.500 H42 Q46 7.500 46 11.500 V37.500 Q46 42 41.500 42 H4.500 Q0 42 0 37.500 Z" fill="url(#fb)"/><path d="M4.500 42 H41.500 Q46 42 46 37.500 V36.500 Q46 41 41.500 41 H4.500 Q0 41 0 36.500 V37.500 Q0 42 4.500 42Z" fill="#6a6a6a" opacity="0.8"/><path d="M46 22 V37.500 Q46 42 41.500 42 H30 Z" fill="#fff" opacity="0.07"/><g fill="none" stroke="#efefef" stroke-width="1.200"><path d="M19.600 29.600 V19.400 L27.800 18 V28.200"/><path d="M19.600 21.600 L27.800 20.200" stroke-width="1.600"/><ellipse cx="17.900" cy="29.800" rx="2.100" ry="1.700" fill="#efefef" stroke="none"/><ellipse cx="26.100" cy="28.400" rx="2.100" ry="1.700" fill="#efefef" stroke="none"/></g></svg></div><div class="lab cj" style="left:208.30px;top:138.3px"><span style="display:block">音乐</span></div><div class="abs" style="left:343.20000000000005px;top:89px"><svg class="ico" width="46" height="42" viewBox="0 0 46 42"><rect y="2" width="46" height="40" rx="5" fill="url(#dsk)"/><path d="M0 7 Q0 2 5 2 H10 V42 H5 Q0 42 0 37 Z" fill="url(#dsk2)"/><path d="M5 42 H41 Q46 42 46 37 V36 Q46 41 41 41 H5 Q0 41 0 36 V37 Q0 42 5 42Z" fill="#803060" opacity="0.5"/></svg></div><div class="lab cj" style="left:312.00px;top:138.3px"><span style="display:block">桌面</span></div><div class="abs" style="left:446.9px;top:89px"><svg class="ico" width="46" height="42" viewBox="0 0 46 42"><path d="M0 5 Q0 0 5 0 H17.5 Q19.5 0 20.8 1.8 L21.6 3 H41 Q46 3 46 8 V20 H0 Z" fill="url(#ft)"/><path d="M0 14.500 Q0 10.500 4 10.500 H17 Q19.200 10.500 20.600 9 Q22 7.500 24 7.500 H42 Q46 7.500 46 11.500 V37.500 Q46 42 41.500 42 H4.500 Q0 42 0 37.500 Z" fill="url(#fb)"/><path d="M4.500 42 H41.500 Q46 42 46 37.500 V36.500 Q46 41 41.500 41 H4.500 Q0 41 0 36.500 V37.500 Q0 42 4.500 42Z" fill="#6a6a6a" opacity="0.8"/><path d="M46 22 V37.500 Q46 42 41.500 42 H30 Z" fill="#fff" opacity="0.07"/></svg></div><div class="lab" style="left:415.70px;top:135.60000000000002px"><span style="display:block;letter-spacing:-0.20px;margin-right:0.20px">snap</span></div><div class="abs" style="left:32px;top:166.7px"><svg class="ico" width="45" height="63" viewBox="0 0 45 63"><rect width="45" height="63" fill="#fff"/><rect x="14" y="7.600" width="17" height="1" fill="#777"/><rect x="6.500" y="12" width="8.500" height="1.200" fill="#222"/><rect x="8.600" y="15.900" width="6.400" height="1.100" fill="#444"/><rect x="19" y="16" width="14.600" height="0.800" fill="#a8c4ec"/><rect x="6.800" y="19.800" width="12.600" height="1.300" fill="#222"/><rect x="6.500" y="23.300" width="31" height="0.500" fill="#a9c3e8"/><rect x="6.800" y="24.400" width="24.200" height="13.800" fill="#e4ecf7"/><rect x="6.800" y="24.400" width="24.200" height="2.600" fill="#4a7ec4"/><rect x="7.600" y="27.800" width="3.600" height="4" fill="#3a6cb8"/><rect x="12.500" y="29" width="15" height="0.600" fill="#d39a9a"/><rect x="12.500" y="30.800" width="16.500" height="0.600" fill="#d39a9a"/><rect x="12.500" y="32.600" width="13" height="0.600" fill="#b4b8d4"/><rect x="14" y="34.400" width="6" height="0.600" fill="#d0a0c0"/><rect x="14" y="36" width="5" height="0.600" fill="#b4b8d4"/><rect x="6.500" y="40.800" width="14" height="0.700" fill="#888"/><rect x="6.800" y="43" width="14.200" height="17" fill="#f1f3f7"/><rect x="6.800" y="55.200" width="14.200" height="2.800" fill="#3f92e4"/><rect x="7.600" y="46" width="1.800" height="1.800" fill="#b88"/><rect x="7.600" y="49.600" width="1.800" height="1.800" fill="#c96"/><rect x="7.600" y="52.400" width="1.800" height="1.600" fill="#a98"/><rect x="10.400" y="46.600" width="7" height="0.600" fill="#a4a8b8"/><rect x="10.400" y="50.200" width="7" height="0.600" fill="#a4a8b8"/><rect x="23.400" y="45.200" width="1.800" height="2.800" fill="#6ab0e8"/><rect x="27" y="45.200" width="1.800" height="2.800" fill="#f0c040"/><rect x="30.400" y="45.200" width="1.800" height="2.800" fill="#8ed070"/><rect x="22" y="51" width="12" height="0.600" fill="#9a9eb0"/><rect x="22" y="54.200" width="9" height="0.600" fill="#9a9eb0"/><rect x="22" y="57" width="3.600" height="1.800" fill="#a4a8b8"/><rect x="27.600" y="57" width="2.400" height="1.800" fill="#a4a8b8"/></svg></div></div></div>
<div class="shadow" style="left:925px;top:258px;width:734px;height:640px;box-shadow:0 0 0 1px rgba(0,0,0,0.16),0 3px 12px rgba(0,0,0,0.30)"></div>
<div id="term">
<div id="thdr">
<div class="tbtn" style="left:6px"><svg class="abs" style="left:9px;top:9px;overflow:visible" width="17" height="16" viewBox="0 0 17 16" fill="none" stroke="#d2d2d2" stroke-width="1.100"><path d="M0.800 12.100 H2.500 V4.500 Q2.500 2.700 4.300 2.700 H12.700 Q14.500 2.700 14.500 4.500 V12.100 H16.200"/><path d="M8.500 6 V11 M6 8.500 H11"/></svg></div>
<div id="ttitle">huangzhihao@huangzhihao-virtual-machine: ~/102299142</div>
<div class="tbtn" style="left:523px"><svg class="abs" style="left:9px;top:8px" width="16" height="16" viewBox="0 0 16 16" fill="none" stroke="#d0d0d0" stroke-width="1.100"><circle cx="7.200" cy="7.200" r="5.800"/><path d="M11.400 11.400 L15 14.600" stroke-linecap="round"/></svg></div>
<div class="tbtn" style="left:565px"><svg class="abs" style="left:11.500px;top:10.500px" width="11" height="11" viewBox="0 0 11 11" stroke="#d0d0d0" stroke-width="1.100"><path d="M0 1 H11 M0 5.300 H11 M0 9.600 H11"/></svg></div>
<svg class="abs" style="left:626px;top:18px" width="10" height="10" viewBox="0 0 10 10" stroke="#d0d0d0" stroke-width="1.100" fill="none"><path d="M1 7.500 H9"/></svg>
<svg class="abs" style="left:666px;top:18px" width="10" height="10" viewBox="0 0 10 10" stroke="#d0d0d0" stroke-width="1.100" fill="none"><rect x="1.200" y="1.200" width="7.600" height="7.600"/></svg>
<svg class="abs" style="left:706px;top:18px" width="10" height="10" viewBox="0 0 10 10" stroke="#d0d0d0" stroke-width="1.200" fill="none"><path d="M1 1 L9 9 M9 1 L1 9"/></svg>
</div>
<div id="tbody"><span class="g">huangzhihao@huangzhihao-virtual-machine</span>:<span class="b">~/102299142</span>$ java -version
java version "1.8.0_341"
Java(TM) SE Runtime Environment (build 1.8.0_341-b10)
Java HotSpot(TM) 64-Bit Server VM (build 25.341-b10, mixed mode)
<span class="g">huangzhihao@huangzhihao-virtual-machine</span>:<span class="b">~/102299142</span>$ </div>
<div class="abs" style="left:477px;top:151px;width:11px;height:28px;border:1px solid #fff"></div>
<div class="abs" style="left:725px;top:50px;width:6px;height:600px;border-radius:3px;background:#4b2140"></div>
</div>

<div class="shadow" style="left:114px;top:471px;width:715px;height:420px;box-shadow:0 0 0 1px rgba(0,0,0,0.30),0 6px 22px rgba(0,0,0,0.42)"></div>
<div class="win act" id="w3" style="left:114px;top:471px;height:420px"><div class="hdr"><div class="btn" style="left:6px;width:71px"><i style="left:34px"></i><svg style="left:13px;top:8px" width="10" height="16" viewBox="0 0 10 16" fill="none" stroke="#3b3b3b" stroke-width="1.1"><path d="M7.700 0.400 L2.500 8 L7.700 15.600"/></svg><svg style="left:47.500px;top:8px" width="10" height="16" viewBox="0 0 10 16" fill="none" stroke="#3b3b3b" stroke-width="1.1"><path d="M2.300 0.400 L7.500 8 L2.300 15.600"/></svg></div><div class="btn" style="left:83px;width:276px"><i style="left:239px"></i><svg style="left:8.500px;top:8px" width="16.500" height="16.500" viewBox="0 0 16 16" fill="none" stroke="#8a8a8a" stroke-width="1.1"><g transform="translate(8 7.5) scale(1.1) translate(-8 -8)"><path d="M1.2 8.2 L8 1.8 L14.8 8.2" stroke-linecap="round" stroke-linejoin="round"/><path d="M3.2 7.4 V13.6 H12.8 V7.4"/><path d="M11.6 2 V4.6" stroke-width="1"/><rect x="8.6" y="9.4" width="2.4" height="4.2" fill="#8a8a8a" stroke="none"/></g></svg><span class="ptxt" style="left:31px"><span style="letter-spacing:0.250px">用户文件夹</span><span style="margin:0 11.300px 0 9.500px">/</span><b style="letter-spacing:-0.2px">102299142</b></span><svg style="left:255px;top:9px" width="4" height="14" viewBox="0 0 4 14" fill="#3b3b3b"><rect x="1.1" y="2.300" width="1.700" height="1.700"/><rect x="1.100" y="6.200" width="1.700" height="1.700"/><rect x="1.100" y="10.100" width="1.700" height="1.700"/></svg></div><div class="btn" style="left:365px;width:36px"><svg style="left:9px;top:8px" width="16" height="16" viewBox="0 0 16 16" fill="none" stroke="#3b3b3b" stroke-width="1.1"><circle cx="7.200" cy="7.200" r="5.800"/><path d="M11.400 11.400 L15 14.600" stroke-linecap="round"/></svg></div><div class="btn" style="left:479px;width:61px"><i style="left:34px"></i><svg style="left:10px;top:9px" width="14" height="14" viewBox="0 0 14 14" fill="none" stroke="#3b3b3b" stroke-width="1"><g stroke-width="0.900"><rect x="2" y="1.900" width="1.900" height="1.900"/><rect x="2" y="6" width="1.900" height="1.900"/><rect x="2" y="10.100" width="1.900" height="1.900"/></g><path d="M5.900 2.850 H13.300 M5.900 6.950 H13.300 M5.900 11.050 H13.300" stroke-width="1.100"/></svg><svg style="left:41.300px;top:12.500px" width="12" height="8" viewBox="0 0 12 8" fill="none" stroke="#3b3b3b" stroke-width="1.100"><path d="M1.100 1.200 L6 6 L10.900 1.200"/></svg></div><div class="btn" style="left:546px;width:36px"><svg style="left:11.600px;top:10.600px" width="11" height="11" viewBox="0 0 11 11" stroke="#3b3b3b" stroke-width="1.100"><path d="M0 1 H10 M0 5.100 H10 M0 9.200 H10"/></svg></div><div class="wc" style="left:600.25px;top:11.250px"></div><div class="wc" style="left:640.25px;top:11.250px"></div><div class="wc" style="left:680.25px;top:11.250px"></div><svg style="left:606.700px;top:18px" width="10" height="10" viewBox="0 0 10 10" stroke="#3b3b3b" stroke-width="1.100" fill="none"><path d="M1 7.500 H9"/></svg><svg style="left:646.700px;top:18px" width="10" height="10" viewBox="0 0 10 10" stroke="#3b3b3b" stroke-width="1.100" fill="none"><rect x="1.400" y="1.400" width="7.200" height="7.200"/></svg><svg style="left:686.600px;top:18px" width="10" height="10" viewBox="0 0 10 10" stroke="#3b3b3b" stroke-width="1.200" fill="none"><path d="M1 1 L9 9 M9 1 L1 9"/></svg></div><div class="side"><div class="srow" style="top:5px"><svg width="16" height="16" viewBox="0 0 16 16" fill="none" stroke="#3c3c3c" stroke-width="1.1"><g transform="translate(8 8) scale(1.08) translate(-8 -8)"><path d="M2.6 5.2 A6.3 6.3 0 1 1 1.7 8" stroke-linecap="round"/><path d="M0.9 2.6 L2.5 5.6 L5.4 4.2" stroke-linecap="round" stroke-linejoin="round" stroke-width="1"/><path d="M8 4.6 V8.2 L10 10.2" stroke-linecap="round"/></g></svg><span>最近使用</span></div><div class="srow" style="top:43px"><svg width="16" height="16" viewBox="0 0 16 16" fill="none" stroke="#3c3c3c" stroke-width="1.1"><g transform="translate(8 7.7) scale(1.0) translate(-8 -8)"><path d="M8 1.6 L9.9 6 L14.6 6.4 L11 9.5 L12.1 14.2 L8 11.7 L3.9 14.2 L5 9.5 L1.4 6.4 L6.1 6 Z" fill="#3c3c3c" stroke-width="0.6" stroke-linejoin="round"/></g></svg><span>收藏</span></div><div class="srow" style="top:81px"><svg width="16" height="16" viewBox="0 0 16 16" fill="none" stroke="#3c3c3c" stroke-width="1.1"><g transform="translate(8 7.5) scale(1.1) translate(-8 -8)"><path d="M1.2 8.2 L8 1.8 L14.8 8.2" stroke-linecap="round" stroke-linejoin="round"/><path d="M3.2 7.4 V13.6 H12.8 V7.4"/><path d="M11.6 2 V4.6" stroke-width="1"/><rect x="8.6" y="9.4" width="2.4" height="4.2" fill="#3c3c3c" stroke="none"/></g></svg><span>主目录</span></div><div class="srow" style="top:119px"><svg width="16" height="16" viewBox="0 0 16 16" fill="none" stroke="#3c3c3c" stroke-width="1.1"><g transform="translate(8 8) scale(1.14) translate(-8 -8)"><rect x="1.500" y="2.500" width="13" height="11" rx="0.400"/><path d="M4.300 2.500 V13.500 M11.700 2.500 V13.500 M4.300 8 H11.700" stroke-width="1"/><path d="M1.500 4.700 H4.300 M1.500 6.900 H4.300 M1.500 9.100 H4.300 M1.500 11.300 H4.300 M11.700 4.700 H14.500 M11.700 6.900 H14.500 M11.700 9.100 H14.500 M11.700 11.300 H14.500" stroke-width="0.800"/></g></svg><span>视频</span></div><div class="srow" style="top:157px"><svg width="16" height="16" viewBox="0 0 16 16" fill="none" stroke="#3c3c3c" stroke-width="1.1"><g transform="translate(8 8.3) scale(1.15) translate(-8 -8)"><rect x="1.500" y="2.500" width="13" height="11" rx="1.800"/><path d="M2 12.400 H14" stroke-width="1.600"/><path d="M3.800 10.800 L6.400 7.200 L8.200 9.400 L9.400 8.400 L11.800 10.800 Z" fill="#3c3c3c" stroke="none"/><circle cx="11.400" cy="5.600" r="1" fill="#3c3c3c" stroke="none"/></g></svg><span>图片</span></div><div class="srow" style="top:195px"><svg width="16" height="16" viewBox="0 0 16 16" fill="none" stroke="#3c3c3c" stroke-width="1.1"><g transform="translate(8 8) scale(1.15) translate(-8 -8)"><path d="M3 2.6 Q3 1.5 4.1 1.5 H9.6 L13 4.9 V13.4 Q13 14.5 11.9 14.5 H4.1 Q3 14.5 3 13.4 Z" stroke-linejoin="round"/><path d="M5.4 7 H10.6 M5.4 9.2 H10.6 M5.4 11.4 H10.6" stroke-width="1"/><path d="M9.4 1.8 V5.2 H12.8" stroke-width="1"/></g></svg><span>文档</span></div><div class="srow" style="top:233px"><svg width="16" height="16" viewBox="0 0 16 16" fill="none" stroke="#3c3c3c" stroke-width="1.1"><g transform="translate(8 8) scale(1.12) translate(-8 -8)"><path d="M6.4 1.5 H9.6 V7 H12 L8 11.2 L4 7 H6.4 Z" stroke-linejoin="round" stroke-width="1"/><path d="M3 14.2 H13" stroke-linecap="round" stroke-width="1.2"/></g></svg><span>下载</span></div><div class="srow" style="top:271px"><svg width="16" height="16" viewBox="0 0 16 16" fill="none" stroke="#3c3c3c" stroke-width="1.1"><g transform="translate(8 7.5) scale(1.08) translate(-8 -8)"><path d="M5.6 12.4 V2.8 L13.4 1.6 V11.2" stroke-width="1.2"/><path d="M5.6 5 L13.4 3.8" stroke-width="1.6"/><ellipse cx="3.9" cy="12.6" rx="2.1" ry="1.7" fill="#3c3c3c" stroke="none"/><ellipse cx="11.7" cy="11.4" rx="2.1" ry="1.7" fill="#3c3c3c" stroke="none"/></g></svg><span>音乐</span></div><div class="srow" style="top:309px"><svg width="16" height="16" viewBox="0 0 16 16" fill="none" stroke="#3c3c3c" stroke-width="1.1"><g transform="translate(8 7.6) scale(1.1) translate(-8 -8)"><path d="M2.6 5 V13 Q2.6 14.4 4 14.4 H8.4" /><path d="M13.4 5 V8.4"/><path d="M1.4 4.4 H14.6" stroke-width="1.4"/><path d="M5.4 3.8 V2.6 Q5.4 1.6 6.4 1.6 H9.6 Q10.6 1.6 10.6 2.6 V3.8" /><path d="M5.4 6.6 V12 M7.6 6.6 V12 M9.8 6.6 V9.4" stroke-width="1"/><circle cx="12" cy="12.4" r="2.3"/><path d="M12 10.2 V9" stroke-width="1"/></g></svg><span>回收站</span></div><div class="abs" style="left:0;top:348.500px;width:188px;height:1px;background:#dedede"></div><div class="abs" style="left:0;top:355px;width:188px;height:40px;background:#e1e1e1"></div></div><div class="cont"><div class="abs" style="left:32.06999999999999px;top:9px"><svg class="ico" width="46" height="42" viewBox="0 0 46 42"><path d="M0 5 Q0 0 5 0 H17.5 Q19.5 0 20.8 1.8 L21.6 3 H41 Q46 3 46 8 V20 H0 Z" fill="url(#fta)"/><path d="M0 14.500 Q0 10.500 4 10.500 H17 Q19.200 10.500 20.600 9 Q22 7.500 24 7.500 H42 Q46 7.500 46 11.500 V37.500 Q46 42 41.500 42 H4.500 Q0 42 0 37.500 Z" fill="url(#fba)"/><path d="M4.500 42 H41.500 Q46 42 46 37.500 V36.500 Q46 41 41.500 41 H4.500 Q0 41 0 36.500 V37.500 Q0 42 4.500 42Z" fill="#6a6a6a" opacity="0.8"/><path d="M46 22 V37.500 Q46 42 41.500 42 H30 Z" fill="#fff" opacity="0.07"/></svg></div><div class="lab" style="left:0.87px;top:56px"><span style="display:block;letter-spacing:0.72px;margin-right:-0.72px">distributio</span><span style="display:block;letter-spacing:0.04px;margin-right:-0.04px">n-karaf-</span><span style="display:block;letter-spacing:-0.35px;margin-right:0.35px;position:relative;left:-3px">0.6.4-Car…</span></div><div class="abs" style="left:135.8px;top:9px"><svg class="ico" width="46" height="42" viewBox="0 0 46 42"><path d="M0 5 Q0 0 5 0 H17.5 Q19.5 0 20.8 1.8 L21.6 3 H41 Q46 3 46 8 V20 H0 Z" fill="url(#fta)"/><path d="M0 14.500 Q0 10.500 4 10.500 H17 Q19.200 10.500 20.600 9 Q22 7.500 24 7.500 H42 Q46 7.500 46 11.500 V37.500 Q46 42 41.500 42 H4.500 Q0 42 0 37.500 Z" fill="url(#fba)"/><path d="M4.500 42 H41.500 Q46 42 46 37.500 V36.500 Q46 41 41.500 41 H4.500 Q0 41 0 36.500 V37.500 Q0 42 4.500 42Z" fill="#6a6a6a" opacity="0.8"/><path d="M46 22 V37.500 Q46 42 41.500 42 H30 Z" fill="#fff" opacity="0.07"/></svg></div><div class="lab" style="left:104.60px;top:56px"><span style="display:block;letter-spacing:0.39px;margin-right:-0.39px">mininet</span></div><div class="abs" style="left:239.5px;top:9px"><svg class="ico" width="46" height="42" viewBox="0 0 46 42"><path d="M0 5 Q0 0 5 0 H17.5 Q19.5 0 20.8 1.8 L21.6 3 H41 Q46 3 46 8 V20 H0 Z" fill="url(#fta)"/><path d="M0 14.500 Q0 10.500 4 10.500 H17 Q19.200 10.500 20.600 9 Q22 7.500 24 7.500 H42 Q46 7.500 46 11.500 V37.500 Q46 42 41.500 42 H4.500 Q0 42 0 37.500 Z" fill="url(#fba)"/><path d="M4.500 42 H41.500 Q46 42 46 37.500 V36.500 Q46 41 41.500 41 H4.500 Q0 41 0 36.500 V37.500 Q0 42 4.500 42Z" fill="#6a6a6a" opacity="0.8"/><path d="M46 22 V37.500 Q46 42 41.500 42 H30 Z" fill="#fff" opacity="0.07"/><circle cx="35" cy="33" r="11" fill="#e9541f"/><rect x="30.200" y="32" width="9.800" height="6.800" rx="0.800" fill="#fff"/><path d="M32.400 32.400 V29.800 Q32.400 26.800 35.100 26.800 Q37.800 26.800 37.800 29.800 V32.400" fill="none" stroke="#fff" stroke-width="1.500"/><rect x="34.400" y="34" width="1.400" height="2.600" fill="#e9541f"/></svg></div><div class="lab" style="left:208.30px;top:56px"><span style="display:block;letter-spacing:0.61px;margin-right:-0.61px">oflops</span></div><div class="abs" style="left:343.20000000000005px;top:9px"><svg class="ico" width="46" height="42" viewBox="0 0 46 42"><path d="M0 5 Q0 0 5 0 H17.5 Q19.5 0 20.8 1.8 L21.6 3 H41 Q46 3 46 8 V20 H0 Z" fill="url(#fta)"/><path d="M0 14.500 Q0 10.500 4 10.500 H17 Q19.200 10.500 20.600 9 Q22 7.500 24 7.500 H42 Q46 7.500 46 11.500 V37.500 Q46 42 41.500 42 H4.500 Q0 42 0 37.500 Z" fill="url(#fba)"/><path d="M4.500 42 H41.500 Q46 42 46 37.500 V36.500 Q46 41 41.500 41 H4.500 Q0 41 0 36.500 V37.500 Q0 42 4.500 42Z" fill="#6a6a6a" opacity="0.8"/><path d="M46 22 V37.500 Q46 42 41.500 42 H30 Z" fill="#fff" opacity="0.07"/><circle cx="35" cy="33" r="11" fill="#e9541f"/><rect x="30.200" y="32" width="9.800" height="6.800" rx="0.800" fill="#fff"/><path d="M32.400 32.400 V29.800 Q32.400 26.800 35.100 26.800 Q37.800 26.800 37.800 29.800 V32.400" fill="none" stroke="#fff" stroke-width="1.500"/><rect x="34.400" y="34" width="1.400" height="2.600" fill="#e9541f"/></svg></div><div class="lab" style="left:312.00px;top:56px"><span style="display:block;letter-spacing:0.91px;margin-right:-0.91px">oftest</span></div><div class="abs" style="left:446.9px;top:9px"><svg class="ico" width="46" height="42" viewBox="0 0 46 42"><path d="M0 5 Q0 0 5 0 H17.5 Q19.5 0 20.8 1.8 L21.6 3 H41 Q46 3 46 8 V20 H0 Z" fill="url(#fta)"/><path d="M0 14.500 Q0 10.500 4 10.500 H17 Q19.200 10.500 20.600 9 Q22 7.500 24 7.500 H42 Q46 7.500 46 11.500 V37.500 Q46 42 41.500 42 H4.500 Q0 42 0 37.500 Z" fill="url(#fba)"/><path d="M4.500 42 H41.500 Q46 42 46 37.500 V36.500 Q46 41 41.500 41 H4.500 Q0 41 0 36.500 V37.500 Q0 42 4.500 42Z" fill="#6a6a6a" opacity="0.8"/><path d="M46 22 V37.500 Q46 42 41.500 42 H30 Z" fill="#fff" opacity="0.07"/><circle cx="35" cy="33" r="11" fill="#e9541f"/><rect x="30.200" y="32" width="9.800" height="6.800" rx="0.800" fill="#fff"/><path d="M32.400 32.400 V29.800 Q32.400 26.800 35.100 26.800 Q37.800 26.800 37.800 29.800 V32.400" fill="none" stroke="#fff" stroke-width="1.500"/><rect x="34.400" y="34" width="1.400" height="2.600" fill="#e9541f"/></svg></div><div class="lab" style="left:415.70px;top:56px"><span style="display:block;letter-spacing:0.48px;margin-right:-0.48px">openflow</span></div><div class="abs" style="left:32.06999999999999px;top:118px"><svg class="ico" width="46" height="42" viewBox="0 0 46 42"><path d="M0 5 Q0 0 5 0 H17.5 Q19.5 0 20.8 1.8 L21.6 3 H41 Q46 3 46 8 V20 H0 Z" fill="url(#fta)"/><path d="M0 14.500 Q0 10.500 4 10.500 H17 Q19.200 10.500 20.600 9 Q22 7.500 24 7.500 H42 Q46 7.500 46 11.500 V37.500 Q46 42 41.500 42 H4.500 Q0 42 0 37.500 Z" fill="url(#fba)"/><path d="M4.500 42 H41.500 Q46 42 46 37.500 V36.500 Q46 41 41.500 41 H4.500 Q0 41 0 36.500 V37.500 Q0 42 4.500 42Z" fill="#6a6a6a" opacity="0.8"/><path d="M46 22 V37.500 Q46 42 41.500 42 H30 Z" fill="#fff" opacity="0.07"/></svg></div><div class="lab" style="left:0.87px;top:165px"><span style="display:block;letter-spacing:0.32px;margin-right:-0.32px">postman-</span><span style="display:block;letter-spacing:-0.04px;margin-right:0.04px">linux-x64</span></div><div class="abs" style="left:135.8px;top:118px"><svg class="ico" width="46" height="42" viewBox="0 0 46 42"><path d="M0 5 Q0 0 5 0 H17.5 Q19.5 0 20.8 1.8 L21.6 3 H41 Q46 3 46 8 V20 H0 Z" fill="url(#fta)"/><path d="M0 14.500 Q0 10.500 4 10.500 H17 Q19.200 10.500 20.600 9 Q22 7.500 24 7.500 H42 Q46 7.500 46 11.500 V37.500 Q46 42 41.500 42 H4.500 Q0 42 0 37.500 Z" fill="url(#fba)"/><path d="M4.500 42 H41.500 Q46 42 46 37.500 V36.500 Q46 41 41.500 41 H4.500 Q0 41 0 36.500 V37.500 Q0 42 4.500 42Z" fill="#6a6a6a" opacity="0.8"/><path d="M46 22 V37.500 Q46 42 41.500 42 H30 Z" fill="#fff" opacity="0.07"/><circle cx="35" cy="33" r="11" fill="#e9541f"/><rect x="30.200" y="32" width="9.800" height="6.800" rx="0.800" fill="#fff"/><path d="M32.400 32.400 V29.800 Q32.400 26.800 35.100 26.800 Q37.800 26.800 37.800 29.800 V32.400" fill="none" stroke="#fff" stroke-width="1.500"/><rect x="34.400" y="34" width="1.400" height="2.600" fill="#e9541f"/></svg></div><div class="lab" style="left:104.60px;top:165px"><span style="display:block;letter-spacing:0.02px;margin-right:-0.02px">pox</span></div><div class="abs" style="left:239.5px;top:118px"><svg class="ico" width="46" height="42" viewBox="0 0 46 42"><path d="M0 5 Q0 0 5 0 H17.5 Q19.5 0 20.8 1.8 L21.6 3 H41 Q46 3 46 8 V20 H0 Z" fill="url(#fta)"/><path d="M0 14.500 Q0 10.500 4 10.500 H17 Q19.200 10.500 20.600 9 Q22 7.500 24 7.500 H42 Q46 7.500 46 11.500 V37.500 Q46 42 41.500 42 H4.500 Q0 42 0 37.500 Z" fill="url(#fba)"/><path d="M4.500 42 H41.500 Q46 42 46 37.500 V36.500 Q46 41 41.500 41 H4.500 Q0 41 0 36.500 V37.500 Q0 42 4.500 42Z" fill="#6a6a6a" opacity="0.8"/><path d="M46 22 V37.500 Q46 42 41.500 42 H30 Z" fill="#fff" opacity="0.07"/></svg></div><div class="lab" style="left:208.30px;top:165px"><span style="display:block;letter-spacing:0.08px;margin-right:-0.08px">ryu</span></div><div class="abs" style="left:347.20000000000005px;top:116px"><svg class="ico" width="38" height="46" viewBox="0 0 38 46"><defs><linearGradient id="zg" x1="0" y1="0" x2="0" y2="1"><stop offset="0" stop-color="#f1f1f1"/><stop offset="1" stop-color="#fafafa"/></linearGradient></defs><rect x="0.500" y="0.500" width="37" height="45" rx="5.500" fill="url(#zg)" stroke="#c2c2c2"/><path d="M3 44.600 H35" stroke="#b0b0b0" stroke-width="0.800" opacity="0.6"/><rect x="17" y="1.0" width="2" height="2" fill="#999"/><rect x="19" y="1.0" width="2" height="2" fill="#ececec"/><rect x="19" y="3.0" width="2" height="2" fill="#999"/><rect x="17" y="3.0" width="2" height="2" fill="#ececec"/><rect x="17" y="5.0" width="2" height="2" fill="#999"/><rect x="19" y="5.0" width="2" height="2" fill="#ececec"/><rect x="19" y="7.0" width="2" height="2" fill="#999"/><rect x="17" y="7.0" width="2" height="2" fill="#ececec"/><rect x="17" y="9.0" width="2" height="2" fill="#999"/><rect x="19" y="9.0" width="2" height="2" fill="#ececec"/><rect x="19" y="11.0" width="2" height="2" fill="#999"/><rect x="17" y="11.0" width="2" height="2" fill="#ececec"/><rect x="17" y="13.0" width="2" height="2" fill="#999"/><rect x="19" y="13.0" width="2" height="2" fill="#ececec"/><rect x="19" y="15.0" width="2" height="2" fill="#999"/><rect x="17" y="15.0" width="2" height="2" fill="#ececec"/><rect x="17" y="17.0" width="2" height="2" fill="#999"/><rect x="19" y="17.0" width="2" height="2" fill="#ececec"/><rect x="19" y="19.0" width="2" height="2" fill="#999"/><rect x="17" y="19.0" width="2" height="2" fill="#ececec"/><rect x="17" y="22.200" width="4" height="6.800" fill="#a2a2a2"/><rect x="17" y="22.200" width="4" height="1.400" fill="#8c8c8c"/><rect x="18" y="25.800" width="2" height="2.400" fill="#fff"/></svg></div><div class="lab" style="left:312.00px;top:165px"><span style="display:block;letter-spacing:0.72px;margin-right:-0.72px">distributio</span><span style="display:block;letter-spacing:0.04px;margin-right:-0.04px">n-karaf-</span><span style="display:block;letter-spacing:-0.35px;margin-right:0.35px;position:relative;left:-3px">0.6.4-Car…</span></div></div></div>
</body></html>
